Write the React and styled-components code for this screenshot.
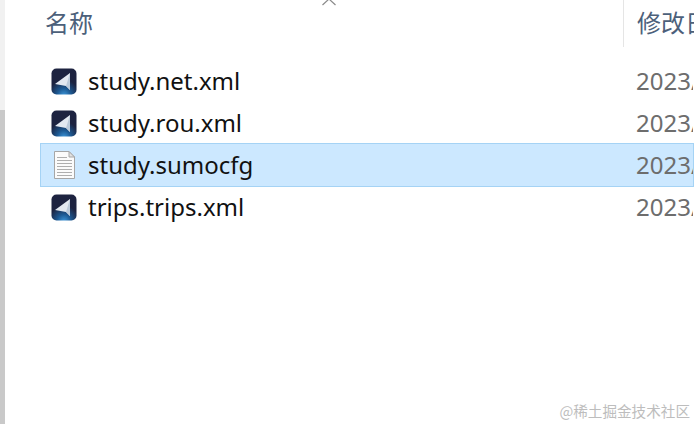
import styled, { createGlobalStyle } from "styled-components";

const GlobalStyle = createGlobalStyle`
  html, body {
    margin: 0;
    padding: 0;
    background: #fff;
    overflow: hidden;
  }
  * {
    box-sizing: border-box;
  }
`;

const Page = styled.div`
  position: relative;
  width: 694px;
  height: 424px;
  display: flex;
  overflow: hidden;
  background: #fff;
  font-family: "Noto Sans", "Noto Sans CJK SC", sans-serif;
`;

const ScrollTrack = styled.div`
  flex: 0 0 5px;
  display: flex;
  flex-direction: column;
  background: #f1f1f1;
`;

const ScrollThumb = styled.div`
  margin-top: 110px;
  flex: 1;
  background: #c9c9c9;
`;

const Pane = styled.div`
  flex: 1;
  min-width: 0;
  display: flex;
  flex-direction: column;
`;

const Header = styled.div`
  position: relative;
  height: 47px;
  display: flex;
  flex: none;
`;

const NameHeading = styled.div`
  width: 619px;
  padding: 5px 0 0 40px;
  font-size: 24px;
  line-height: 36px;
  color: #4c607a;
  border-right: 1px solid #e5e5e5;
`;

const DateHeading = styled.div`
  flex: 1;
  min-width: 0;
  padding: 5px 0 0 13px;
  font-size: 24px;
  line-height: 36px;
  color: #4c607a;
  white-space: nowrap;
  overflow: hidden;
`;

const SortArrow = styled.svg`
  position: absolute;
  left: 316px;
  top: 0;
`;

const Rows = styled.div`
  margin-top: 12px;
  display: flex;
  flex-direction: column;
  padding-left: 35px;
`;

const Row = styled.div`
  height: 44px;
  margin-bottom: -2px;
  display: flex;
  align-items: center;
  border: 1px solid ${(p) => (p.$selected ? "#a5d3f5" : "transparent")};
  background: ${(p) => (p.$selected ? "#cce8ff" : "transparent")};
  padding-left: 9px;
`;

const IconSlot = styled.div`
  flex: 0 0 28px;
  height: 28px;
  display: flex;
  align-items: center;
  justify-content: center;
`;

const FileName = styled.div`
  width: 558px;
  padding-left: 10px;
  font-size: 24px;
  line-height: 32px;
  color: #111;
  white-space: nowrap;
`;

const FileDate = styled.div`
  flex: 1;
  min-width: 0;
  font-size: 24px;
  line-height: 32px;
  color: #6d6d6d;
  overflow: hidden;
  white-space: nowrap;
`;

const Watermark = styled.div`
  position: absolute;
  right: 4px;
  bottom: 4px;
  font-family: "Noto Sans CJK SC", serif;
  font-size: 14.6px;
  line-height: 18px;
  color: #bdbdbd;
  white-space: nowrap;
`;

function AppIcon({ id }) {
  return (
    <svg width="26" height="27" viewBox="0 0 26 27">
      <defs>
        <radialGradient id={id} cx="0.5" cy="1.05" r="0.62">
          <stop offset="0" stopColor="#3f9ade" />
          <stop offset="0.45" stopColor="#1d5a94" />
          <stop offset="1" stopColor="#1d2340" />
        </radialGradient>
      </defs>
      <rect x="0.5" y="0.5" width="25" height="26" rx="5" fill={`url(#${id})`} />
      <path d="M4 16 L19 5 L19 22 L15 18 Z" fill="#e3e8f0" />
      <path d="M15 18 L19 22 L19 5 Z" fill="#bccada" />
    </svg>
  );
}

function DocIcon() {
  return (
    <svg width="21" height="28" viewBox="0 0 21 28">
      <path d="M0.5 0.5 H15 L20.5 6 V27.5 H0.5 Z" fill="#fbfbfb" stroke="#a6a6a6" />
      <path d="M15 0.5 V6 H20.5 Z" fill="#e2e2e2" stroke="#a6a6a6" />
      <path
        d="M3 6.5 H13 M3 9.5 H18 M3 12.5 H18 M3 15.5 H18 M3 18.5 H18 M3 21.5 H18 M3 24.5 H18"
        stroke="#aeaeae"
        strokeWidth="1"
      />
    </svg>
  );
}

const files = [
  { name: "study.net.xml", icon: "app" },
  { name: "study.rou.xml", icon: "app" },
  { name: "study.sumocfg", icon: "doc", selected: true },
  { name: "trips.trips.xml", icon: "app" },
];

export default function App() {
  return (
    <>
      <GlobalStyle />
      <Page>
        <ScrollTrack>
          <ScrollThumb />
        </ScrollTrack>
        <Pane>
          <Header>
            <NameHeading>名称</NameHeading>
            <DateHeading>修改日期</DateHeading>
            <SortArrow width="16" height="6" viewBox="0 0 16 6">
              <path d="M1.5 5 L8 -1 L14.5 5" fill="none" stroke="#8a8a8a" strokeWidth="1.2" />
            </SortArrow>
          </Header>
          <Rows>
            {files.map((file, i) => (
              <Row key={file.name} $selected={file.selected}>
                <IconSlot>
                  {file.icon === "app" ? <AppIcon id={`app-grad-${i}`} /> : <DocIcon />}
                </IconSlot>
                <FileName>{file.name}</FileName>
                <FileDate>2023/</FileDate>
              </Row>
            ))}
          </Rows>
        </Pane>
        <Watermark>@稀土掘金技术社区</Watermark>
      </Page>
    </>
  );
}
